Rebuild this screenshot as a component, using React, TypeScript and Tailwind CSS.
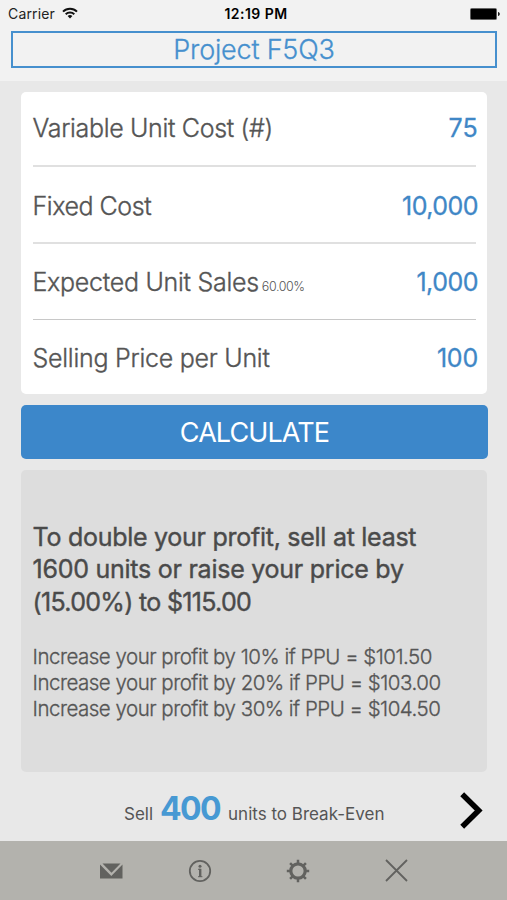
interface Field {
  label: string;
  value: string;
  note?: string;
  rowClass: string;
  labelClass: string;
  valueClass: string;
}

const fields: Field[] = [
  {
    label: "Variable Unit Cost (#)",
    value: "75",
    rowClass: "h-[75px] border-b-2 border-[#e0e0e0]",
    labelClass: "tracking-[-0.33px]",
    valueClass: "tracking-[0.2px]",
  },
  {
    label: "Fixed Cost",
    value: "10,000",
    rowClass: "h-[77px] border-b-2 border-[#e0e0e0] pt-[4px]",
    labelClass: "tracking-[-0.45px]",
    valueClass: "tracking-[-0.55px]",
  },
  {
    label: "Expected Unit Sales",
    value: "1,000",
    note: "60.00%",
    rowClass: "h-[76px] border-b border-[#c8c8c8] pt-[2px]",
    labelClass: "tracking-[-0.28px]",
    valueClass: "tracking-[-0.5px]",
  },
  {
    label: "Selling Price per Unit",
    value: "100",
    rowClass: "h-[74px] pt-[3px]",
    labelClass: "tracking-[-0.26px]",
    valueClass: "tracking-[-0.2px]",
  },
];

const increases = [
  { percent: "10%", price: "$101.50" },
  { percent: "20%", price: "$103.00" },
  { percent: "30%", price: "$104.50" },
];

const StatusBar = () => (
  <div className="grid h-[28px] grid-cols-3 items-center pl-[8px] pr-[7px] text-[14px] leading-[16px] text-black">
    <div className="flex items-center gap-[7px]">
      <span className="tracking-[0.15px] text-[#222]">Carrier</span>
      <svg className="-mt-[2px]" width="16" height="12" viewBox="0 0 16 12" fill="none" stroke="#111" strokeWidth="2">
        <path d="M1 4.6a10 10 0 0 1 14 0" />
        <path d="M3.7 7.3a6.2 6.2 0 0 1 8.6 0" />
        <path d="M8 11.6 5.6 9.1a3.5 3.5 0 0 1 4.8 0z" fill="#111" stroke="none" />
      </svg>
    </div>
    <span className="pl-[4px] text-center font-semibold tracking-[0.45px]">12:19 PM</span>
    <svg className="-mt-[1px] justify-self-end" width="30" height="12" viewBox="0 0 30 12">
      <rect x="0" y="0" width="27" height="12" rx="1.5" fill="#888" />
      <rect x="0.7" y="0.8" width="25.6" height="10.4" rx="1" fill="#000" />
      <path d="M28 4v4c2.4-.6 2.4-3.4 0-4z" fill="#222" />
    </svg>
  </div>
);

const Toolbar = () => (
  <footer className="flex h-[59px] items-center bg-[#b3b2ad] pl-[100px] text-[#62625f]">
    <button className="w-[88px]">
      <svg width="23" height="16" viewBox="0 0 23 16" fill="currentColor">
        <path d="M2.5.5h18l-9 9.3z" />
        <path d="M0 1.6v13.9h22.500V1.600L11.300 12.900z" />
      </svg>
    </button>
    <button className="w-[98px]">
      <svg width="24" height="24" viewBox="0 0 24 24" fill="none" stroke="currentColor">
        <circle cx="12" cy="12" r="10.200" strokeWidth="1.800" />
        <circle cx="12" cy="7.200" r="1.500" fill="currentColor" stroke="none" />
        <path d="M10 10.300h2.500M10 17.700h4.400" strokeWidth="1" />
        <path d="M12.200 9.800v8.200" strokeWidth="2.400" />
      </svg>
    </button>
    <button className="w-[99px]">
      <svg width="24" height="24" viewBox="0 0 24 24" fill="none" stroke="currentColor">
        <circle cx="12" cy="12" r="7.200" strokeWidth="3.200" />
        <path
          d="M12 .8v3.500M12 19.700v3.500M.8 12h3.500M19.700 12h3.500M4.100 4.100l2.500 2.500M17.400 17.400l2.500 2.500M4.100 19.900l2.500-2.500M17.400 6.600l2.500-2.500"
          strokeWidth="2.500"
        />
      </svg>
    </button>
    <button>
      <svg width="23" height="23" viewBox="0 0 23 23" fill="none" stroke="currentColor" strokeWidth="1.800">
        <path d="M1 1l21 21M22 1L1 22" />
      </svg>
    </button>
  </footer>
);

const App: React.FC = () => {
  return (
    <div className="flex h-[900px] w-[507px] flex-col overflow-hidden bg-[#e8e8e8] font-['Inter','Liberation_Sans',sans-serif] text-[#555]">
      <header className="h-[81px] bg-[#f2f2f2]">
        <StatusBar />
        <div className="ml-[11px] mt-[3px] flex h-[37px] w-[486px] items-center justify-center border-2 border-[#4690ce] pt-[2px]">
          <h1 className="whitespace-nowrap text-[27px] font-light tracking-[-0.2px] text-[#4690ce] [-webkit-text-stroke:0.3px]">
            Project F5Q3
          </h1>
        </div>
      </header>

      <main className="flex flex-1 flex-col px-[21px]">
        <section className="mt-[11px] h-[302px] w-[466px] rounded-[5px] bg-white pl-[12px] pr-[11px]">
          {fields.map((field) => (
            <div
              key={field.label}
              className={`flex items-center justify-between ${field.rowClass}`}
            >
              <div className="-ml-[0.5px] flex items-baseline whitespace-nowrap">
                <span className={`text-[25px] font-light [-webkit-text-stroke:0.35px] ${field.labelClass}`}>
                  {field.label}
                </span>
                {field.note && (
                  <span className="ml-[3px] text-[12.5px] font-light tracking-[-0.45px]">
                    {field.note}
                  </span>
                )}
              </div>
              <span className={`-mr-[2px] text-[25px] text-[#3f87c6] [-webkit-text-stroke:0.3px] ${field.valueClass}`}>
                {field.value}
              </span>
            </div>
          ))}
        </section>

        <button className="mt-[11px] h-[54px] w-[467px] rounded-[5px] bg-[#3c87ca] pt-[3px] text-[27px] tracking-[-0.9px] text-white">
          CALCULATE
        </button>

        <section className="mt-[11px] h-[302px] w-[466px] rounded-[5px] bg-[#dddddd] pl-[11.5px] pt-[51px]">
          <p className="whitespace-nowrap text-[25px] leading-[32.3px] text-[#4a4a4a] [-webkit-text-stroke:0.4px]">
            <span className="block tracking-[-0.27px]">To double your profit, sell at least</span>
            <span className="block tracking-[-0.25px]">1600 units or raise your price by</span>
            <span className="block tracking-[-0.68px]">(15.00%) to $115.00</span>
          </p>
          <div className="mt-[26px] whitespace-nowrap text-[20.5px] font-light leading-[26px] tracking-[-0.5px] [-webkit-text-stroke:0.3px]">
            {increases.map((item) => (
              <p key={item.percent}>
                Increase your profit by {item.percent} if PPU = {item.price}
              </p>
            ))}
          </div>
        </section>

        <div className="flex flex-1 items-center pl-[103px] pt-[6px]">
          <p className="-mt-[2px] flex w-[336px] items-baseline whitespace-nowrap text-[17px]">
            <span>Sell</span>
            <span className="ml-[7px] text-[32px] font-bold tracking-[-1.6px] text-[#4799d3]">400</span>
            <span className="ml-[8px]">units to Break-Even</span>
          </p>
          <svg className="mt-[2px]" width="23" height="37" viewBox="0 0 23 37" fill="none" stroke="#000" strokeWidth="5.5">
            <path d="M2.2 2.2l16.5 16.3L2.2 34.8" />
          </svg>
        </div>
      </main>

      <Toolbar />
    </div>
  );
};

export default App;
